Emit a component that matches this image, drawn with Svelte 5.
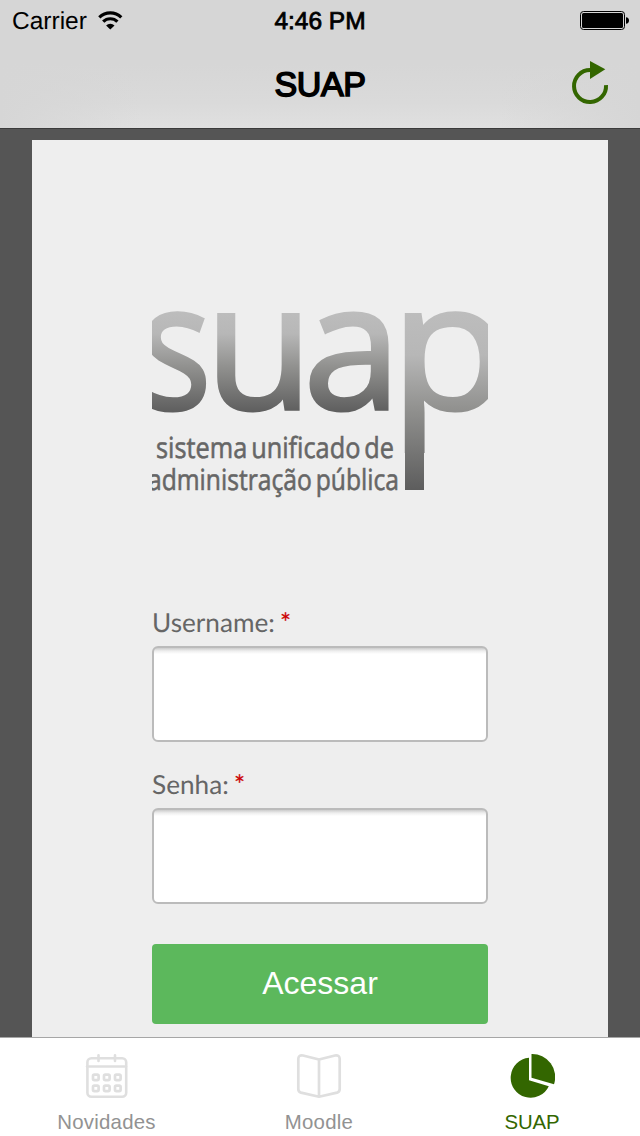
<script>
  let active = $state('SUAP');
  const tabs = ['Novidades', 'Moodle', 'SUAP'];
  const fields = [
    { label: 'Username:', type: 'text' },
    { label: 'Senha:', type: 'password' }
  ];
  const cells = [[93, 1074.6], [104, 1074.6], [115, 1074.6], [93, 1085.6], [104, 1085.6], [115, 1085.6]];
</script>

<div class="screen">
  <header>
    <div class="status">
      <div class="carrier">
        <span>Carrier</span>
        <svg width="26" height="20" viewBox="0 0 26 20">
          <path d="M1.3 6.3A16 16 0 0 1 23.3 6.3M5.2 10.7A10 10 0 0 1 19.4 10.7" fill="none" stroke="#000" stroke-width="3.2" />
          <path d="M12.3 18.6L8.1 14.4A6 6 0 0 1 16.5 14.4Z" />
        </svg>
      </div>
      <div class="time">4:46 PM</div>
      <div class="power">
        <svg width="49" height="19" viewBox="0 0 49 19">
          <rect x=".5" y=".5" width="44" height="18" rx="3" fill="none" stroke="#000" />
          <rect x="2" y="2" width="41" height="15" rx="1.5" />
          <path d="M46 6.2Q49 6.5 49 9.5T46 12.8Z" />
        </svg>
      </div>
    </div>
    <div class="nav">
      <h1>SUAP</h1>
      <button class="refresh" aria-label="Refresh">
        <svg width="38" height="48" viewBox="0 0 38 48">
          <path d="M35 25A16 16 0 1 1 19 10" fill="none" stroke="#360" stroke-width="4" />
          <path d="M19 1L34.3 9.3L19 19Z" fill="#360" />
        </svg>
      </button>
    </div>
  </header>

  <main>
    <div class="sheet">
      <svg class="logo" width="336" height="200" viewBox="152 300 336 200">
        <defs>
          <linearGradient id="short" gradientUnits="userSpaceOnUse" x1="0" y1="310" x2="0" y2="413">
            <stop offset="0" stop-color="#bdbdbd" /><stop offset=".23" stop-color="#b7b7b7" />
            <stop offset=".55" stop-color="#91918f" /><stop offset="1" stop-color="#5d5d5d" />
          </linearGradient>
          <linearGradient id="tall" gradientUnits="userSpaceOnUse" x1="0" y1="310" x2="0" y2="490">
            <stop offset="0" stop-color="#bdbdbd" /><stop offset=".25" stop-color="#b7b7b7" />
            <stop offset=".55" stop-color="#91918f" /><stop offset="1" stop-color="#5d5d5d" />
          </linearGradient>
        </defs>
        <g class="mark" fill="url(#short)" stroke="url(#short)">
          <text transform="translate(140 0) scale(.85 1)" y="408.8">s</text>
          <text x="205" y="408.8">u</text>
          <text x="303.3" y="408.8">a</text>
        </g>
        <g class="mark" fill="url(#tall)" stroke="url(#tall)">
          <text transform="translate(390.3 0) scale(1.1 1)" y="408.8">p</text>
        </g>
        <rect x="405" y="400" width="19" height="90" fill="url(#tall)" />
        <g class="motto">
          <text x="156" y="457.5" textLength="238" lengthAdjust="spacingAndGlyphs">sistema unificado de</text>
          <text x="148" y="490" textLength="251" lengthAdjust="spacingAndGlyphs">administração pública</text>
        </g>
      </svg>

      <form onsubmit={(e) => e.preventDefault()}>
        {#each fields as f}
          <label>
            <span class="caption">{f.label} <b>*</b></span>
            <input type={f.type} />
          </label>
        {/each}
        <button class="submit">Acessar</button>
      </form>
    </div>
  </main>

  <nav class="tabs">
    {#each tabs as tab}
      <button class="tab" class:active={active === tab} onclick={() => (active = tab)}>
        {#if tab === 'Novidades'}
          <svg width="44" height="46" viewBox="85 1053 44 46" fill="none" stroke="#dfdfdf">
            <rect x="87.4" y="1058.2" width="38.8" height="38.6" rx="4" stroke-width="2.6" />
            <path d="M87 1066.5H126M98.5 1055.3V1061M115 1055.3V1061" stroke-width="2.6" stroke-linecap="round" />
            {#each cells as [x, y]}
              <rect {x} {y} width="5.6" height="5.6" rx="1.4" stroke-width="2.7" />
            {/each}
          </svg>
        {:else if tab === 'Moodle'}
          <svg width="46" height="46" viewBox="296 1053 46 46" fill="none" stroke="#dfdfdf" stroke-width="2.7" stroke-linejoin="round">
            <path d="M319 1059.5L303 1055.5Q298.3 1054.8 298.3 1059V1089Q298.3 1091.8 301 1092.6L319 1096.7L337 1092.6Q339.7 1091.8 339.7 1089V1059Q339.7 1054.8 335 1055.5ZM319 1059.5V1096.7" />
          </svg>
        {:else}
          <svg width="46" height="46" viewBox="509 1053 46 46" fill="#360">
            <path d="M529 1057.8V1080.2L548.8 1086.2A20 20 0 1 1 529 1057.8Z" />
            <path d="M531.5 1054A23 23 0 0 1 554 1084.3L531.5 1077.8Z" />
          </svg>
        {/if}
        <span>{tab}</span>
      </button>
    {/each}
  </nav>
</div>

<style>
  :global(body) { margin: 0; }
  .screen {
    width: 640px; height: 1136px; display: flex; flex-direction: column; overflow: hidden;
    background: #555; font-family: "Liberation Sans", Arial, sans-serif;
    text-rendering: geometricPrecision;
  }
  button { border: 0; background: none; padding: 0; font-family: inherit; }
  svg { display: block; }
  header {
    box-sizing: border-box; height: 129px; flex: none; border-bottom: 1px solid #3b3b3b;
    background:
      linear-gradient(to right, #d6d6d6, transparent 22%, transparent 78%, #d6d6d6),
      linear-gradient(#d6d6d6 50%, #dadada 80%, #e0e0e0);
  }
  .status {
    height: 41px; display: grid; grid-template-columns: 1fr 120px 1fr; align-items: center;
    font-size: 24.5px; line-height: 39px; color: #000;
  }
  .carrier { display: flex; align-items: center; gap: 11px; padding-left: 12px; }
  .carrier span { padding-top: 1px; }
  .time { text-align: center; -webkit-text-stroke: .8px #000; padding-top: 1px; white-space: nowrap; }
  .power { display: flex; justify-content: flex-end; padding-right: 11px; }
  .nav { height: 87px; display: grid; grid-template-columns: 1fr 120px 1fr; align-items: center; }
  h1 {
    grid-column: 2; margin: 0; padding-top: 2px; text-align: center; font-size: 34px; line-height: 85px;
    font-weight: 400; letter-spacing: -.4px; -webkit-text-stroke: 1.6px #000; color: #000;
  }
  .refresh { justify-self: end; margin-right: 31px; padding-bottom: 2px; }
  main { height: 908px; flex: none; padding: 11px 32px 0; box-sizing: border-box; overflow: hidden; }
  .sheet { height: 920px; box-sizing: border-box; padding: 160px 120px 0; background: #eee; }
  .logo { overflow: hidden; }
  .mark { font: 176px "Open Sans", sans-serif; stroke-width: 3.6; }
  .motto { font: 29px "Open Sans", sans-serif; fill: #666; stroke: #666; stroke-width: .6; word-spacing: -3px; }
  form { padding-top: 106px; display: flex; flex-direction: column; }
  label { display: block; height: 162px; }
  .caption {
    display: block; height: 40px; line-height: 32px; font-family: Lato, sans-serif;
    font-size: 26.2px; color: #666;
  }
  b { font-weight: 400; color: #c00; margin-left: -1.5px; -webkit-text-stroke: .2px #c00; }
  input {
    display: block; box-sizing: border-box; width: 336px; height: 96px; margin: 0;
    border: 2px solid #bbb; border-radius: 6px; outline: 0;
    background: linear-gradient(#ccc, #eee 3px, #fff 6px);
  }
  .submit {
    height: 80px; margin-top: 14px; padding-bottom: 2px; border-radius: 4px; background: #5cb85c;
    color: #fff; font-size: 32px;
  }
  .tabs {
    height: 99px; box-sizing: border-box; flex: none; border-top: 1px solid #a6a6a6; background: #fff;
    display: grid; grid-template-columns: 213px 212px 214px;
  }
  .tab {
    display: flex; flex-direction: column; align-items: center; padding-top: 15px;
    color: #929292; font-size: 20.4px;
  }
  .tab span { line-height: 24px; margin-top: 11px; letter-spacing: .25px; }
  .tab.active { color: #360; }
  .tab.active span { letter-spacing: -.1px; }
</style>
